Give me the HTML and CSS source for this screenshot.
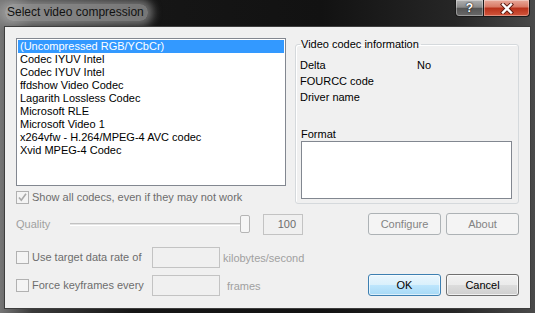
FILE: index.html
```html
<!DOCTYPE html>
<html lang="en">
<head>
    <meta charset="UTF-8">
    <meta name="viewport" content="width=device-width, initial-scale=1.0">
    <title>Select video compression</title>
    <link rel="stylesheet" href="styles.css">
</head>
<body>
    <div class="window">
        <div class="titlebar">
            <span class="title">Select video compression</span>
            <div class="caption-buttons">
                <span class="cap-btn help-btn">?</span>
                <span class="cap-btn close-btn">
                    <svg width="14" height="11" viewBox="0 0 14 11">
                        <path d="M3 1.5 L11 9.5 M11 1.5 L3 9.5" stroke="#5a1a10" stroke-width="4.2" stroke-linecap="square"/>
                        <path d="M3 1.5 L11 9.5 M11 1.5 L3 9.5" stroke="#fff" stroke-width="2.4" stroke-linecap="square"/>
                    </svg>
                </span>
            </div>
        </div>

        <div class="client">
            <div class="top-row">
                <div class="list-col">
                    <ul class="codec-list">
                        <li class="selected">(Uncompressed RGB/YCbCr)</li>
                        <li>Codec IYUV Intel</li>
                        <li>Codec IYUV Intel</li>
                        <li>ffdshow Video Codec</li>
                        <li>Lagarith Lossless Codec</li>
                        <li>Microsoft RLE</li>
                        <li>Microsoft Video 1</li>
                        <li>x264vfw - H.264/MPEG-4 AVC codec</li>
                        <li>Xvid MPEG-4 Codec</li>
                    </ul>
                    <div class="check-row show-all">
                        <span class="check-box">
                            <svg width="11" height="11" viewBox="0 0 11 11">
                                <path d="M2 5.5 L4.3 8.3 L9 1.8" fill="none" stroke="#a9a9a9" stroke-width="1.6"/>
                            </svg>
                        </span>
                        <span class="check-text">Show all codecs, even if they may not work</span>
                    </div>
                </div>

                <fieldset class="info-group">
                    <legend>Video codec information</legend>
                    <div class="info-row"><span class="info-key">Delta</span><span>No</span></div>
                    <div class="info-row"><span class="info-key">FOURCC code</span></div>
                    <div class="info-row"><span class="info-key">Driver name</span></div>
                    <div class="format-label">Format</div>
                    <div class="format-box"></div>
                </fieldset>
            </div>

            <div class="quality-row">
                <span class="quality-label">Quality</span>
                <div class="slider">
                    <div class="slider-track"></div>
                    <div class="slider-thumb"></div>
                </div>
                <div class="edit quality-edit">100</div>
                <div class="button-pair">
                    <button class="btn" disabled>Configure</button>
                    <button class="btn" disabled>About</button>
                </div>
            </div>

            <div class="bottom-row">
                <div class="options">
                    <div class="opt-row">
                        <div class="check-row opt-check">
                            <span class="check-box"></span>
                            <span class="check-text">Use target data rate of</span>
                        </div>
                        <div class="edit opt-edit"></div>
                        <span class="opt-suffix">kilobytes/second</span>
                    </div>
                    <div class="opt-row">
                        <div class="check-row opt-check">
                            <span class="check-box"></span>
                            <span class="check-text">Force keyframes every</span>
                        </div>
                        <div class="edit opt-edit"></div>
                        <span class="opt-suffix frames">frames</span>
                    </div>
                </div>
                <div class="button-pair">
                    <button class="btn btn-default">OK</button>
                    <button class="btn btn-normal">Cancel</button>
                </div>
            </div>
        </div>
    </div>
</body>
</html>
```

FILE: styles.css
```css
body {
    margin: 0;
    font-family: 'Liberation Sans', Arial, sans-serif;
    font-size: 11px;
    color: #000;
}
.window {
    width: 535px;
    height: 313px;
    box-sizing: border-box;
    padding: 0 4px 4px 4px;
    display: flex;
    flex-direction: column;
    background: linear-gradient(90deg, #767676 0%, #3a3a3a 6%, #161616 25%, #121212 60%, #262626 85%, #4a4a4a 100%);
    overflow: hidden;
}
.titlebar {
    height: 26px;
    display: flex;
    justify-content: space-between;
    align-items: flex-start;
    margin-right: 1px;
}
.title {
    margin-top: 4px;
    margin-left: 1px;
    padding: 1px 4px 2px 2px;
    font-size: 12px;
    line-height: 14px;
    color: #111;
    background: rgba(200, 200, 200, 0.55);
    border-radius: 8px;
    box-shadow: 0 0 8px 5px rgba(200, 200, 200, 0.5);
}
.caption-buttons {
    display: flex;
}
.cap-btn {
    height: 17px;
    box-sizing: border-box;
    border: 1px solid #1a1a1a;
    border-top: none;
    display: flex;
    align-items: center;
    justify-content: center;
    box-shadow: inset 0 0 0 1px rgba(255, 255, 255, 0.35);
}
.help-btn {
    width: 28px;
    border-radius: 0 0 0 4px;
    border-right: none;
    background: linear-gradient(#b0b0b0, #8a8a8a 45%, #555 52%, #6a6a6a);
    color: #fff;
    font-weight: bold;
    font-size: 12px;
    text-shadow: 0 0 2px #222, 0 0 1px #000;
}
.close-btn {
    width: 47px;
    border-radius: 0 0 4px 0;
    background: linear-gradient(#e8a99a, #d97a66 42%, #b9321b 52%, #d4573d);
}

.client {
    flex: 1;
    background: #f0f0f0;
    border: 1px solid #3e3e3e;
    padding: 11px 11px 0 11px;
    display: flex;
    flex-direction: column;
}
.top-row {
    display: flex;
    gap: 9px;
}
.list-col {
    width: 271px;
}
.codec-list {
    list-style: none;
    margin: 0;
    padding: 1px;
    height: 148px;
    box-sizing: border-box;
    border: 1px solid #828790;
    background: #fff;
}
.codec-list li {
    height: 13px;
    line-height: 13px;
    padding-left: 2px;
    white-space: nowrap;
}
.codec-list li.selected {
    background: #3399ff;
    color: #fff;
}
.check-row {
    display: flex;
    align-items: center;
    gap: 3px;
}
.show-all {
    margin-top: 5px;
    color: #6d6d6d;
}
.check-box {
    width: 13px;
    height: 13px;
    box-sizing: border-box;
    border: 1px solid #b1b1b1;
    background: #f4f4f4;
    display: flex;
    align-items: center;
    justify-content: center;
}
.check-text {
    line-height: 13px;
}

.info-group {
    width: 224px;
    height: 166px;
    box-sizing: border-box;
    margin: 0;
    padding: 6px 6px 4px 4px;
    border: 1px solid #d5d9dc;
    border-radius: 3px;
    box-shadow: inset 1px 1px 0 #fff;
}
.info-group legend {
    padding: 0 2px 0 1px;
    line-height: 13px;
}
.info-row {
    display: flex;
    line-height: 16px;
}
.info-key {
    width: 117px;
}
.format-label {
    margin-top: 23px;
    margin-left: 1px;
    line-height: 13px;
}
.format-box {
    margin-left: 1px;
    width: 211px;
    height: 58px;
    box-sizing: border-box;
    border: 1px solid #828790;
    background: #fff;
}

.quality-row {
    margin-top: 9px;
    height: 22px;
    display: flex;
    align-items: center;
}
.quality-label {
    width: 50px;
    color: #a0a0a0;
}
.slider {
    width: 184px;
    height: 18px;
    display: flex;
    align-items: center;
    gap: 0;
}
.slider-track {
    width: 170px;
    height: 3px;
    box-sizing: border-box;
    margin-left: 4px;
    border-top: 1px solid #c2c2c2;
    border-bottom: 1px solid #fff;
    background: #e4e4e4;
}
.slider-thumb {
    width: 10px;
    height: 18px;
    box-sizing: border-box;
    border: 1px solid #b5b5b5;
    border-radius: 2px;
    background: #f6f6f6;
}
.edit {
    height: 21px;
    box-sizing: border-box;
    border: 1px solid #c3c3c3;
    background: #f0f0f0;
}
.quality-edit {
    width: 40px;
    margin-left: 13px;
    text-align: right;
    padding-right: 6px;
    line-height: 19px;
    color: #6d6d6d;
}
.button-pair {
    margin-left: auto;
    display: flex;
    gap: 5px;
}
.btn {
    width: 73px;
    height: 22px;
    box-sizing: border-box;
    padding: 0;
    font-family: inherit;
    font-size: 11px;
    border-radius: 3px;
    border: 1px solid #adb2b5;
    background: #f4f4f4;
    color: #838383;
}
.btn-normal {
    border-color: #707070;
    color: #000;
    background: linear-gradient(#f2f2f2, #ebebeb 50%, #dddddd 50%, #cfcfcf);
    box-shadow: inset 0 0 0 1px rgba(255, 255, 255, 0.7);
}
.btn-default {
    border-color: #3c7fb1;
    color: #000;
    background: linear-gradient(#eaf6fd, #d9f0fc 50%, #bee6fd 50%, #a7d9f5);
    box-shadow: inset 0 0 0 1px rgba(255, 255, 255, 0.6);
}

.bottom-row {
    margin-top: 12px;
    display: flex;
    align-items: flex-end;
}
.options {
    display: flex;
    flex-direction: column;
    gap: 7px;
}
.opt-row {
    display: flex;
    align-items: center;
    height: 21px;
}
.opt-check {
    width: 136px;
    color: #6d6d6d;
}
.opt-edit {
    width: 68px;
}
.opt-suffix {
    margin-left: 3px;
    color: #a0a0a0;
}
.opt-suffix.frames {
    margin-left: 7px;
}
```
